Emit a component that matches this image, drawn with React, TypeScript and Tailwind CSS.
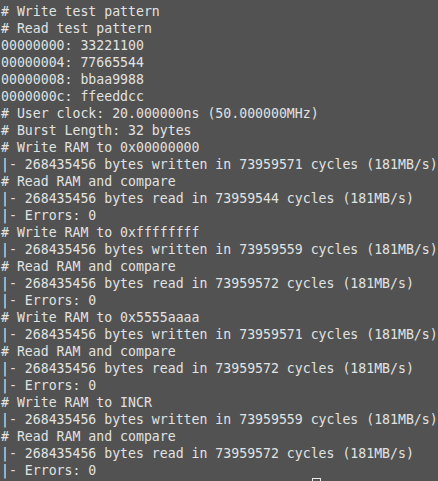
import React from "react";

const lines = [
  "# Write test pattern",
  "# Read test pattern",
  "00000000: 33221100",
  "00000004: 77665544",
  "00000008: bbaa9988",
  "0000000c: ffeeddcc",
  "# User clock: 20.000000ns (50.000000MHz)",
  "# Burst Length: 32 bytes",
  "# Write RAM to 0x00000000",
  "|- 268435456 bytes written in 73959571 cycles (181MB/s)",
  "# Read RAM and compare",
  "|- 268435456 bytes read in 73959544 cycles (181MB/s)",
  "|- Errors: 0",
  "# Write RAM to 0xffffffff",
  "|- 268435456 bytes written in 73959559 cycles (181MB/s)",
  "# Read RAM and compare",
  "|- 268435456 bytes read in 73959572 cycles (181MB/s)",
  "|- Errors: 0",
  "# Write RAM to 0x5555aaaa",
  "|- 268435456 bytes written in 73959571 cycles (181MB/s)",
  "# Read RAM and compare",
  "|- 268435456 bytes read in 73959572 cycles (181MB/s)",
  "|- Errors: 0",
  "# Write RAM to INCR",
  "|- 268435456 bytes written in 73959559 cycles (181MB/s)",
  "# Read RAM and compare",
  "|- 268435456 bytes read in 73959572 cycles (181MB/s)",
  "|- Errors: 0",
];

export default function App() {
  return (
    <div className="relative w-[438px] h-[481px] overflow-hidden bg-[#515251]">
      <div
        className="flex flex-col pt-[3px] pl-px text-[13.2px] leading-[17px] text-[#e2e2e2] whitespace-pre"
        style={{ fontFamily: '"DejaVu Sans Mono", "Liberation Mono", monospace' }}
      >
        {lines.map((l, i) => (
          <div key={i}>{l}</div>
        ))}
      </div>
      <div className="absolute left-[312px] top-[478px] w-[9px] h-[10px] border border-[#e8e8e8]" />
    </div>
  );
}
